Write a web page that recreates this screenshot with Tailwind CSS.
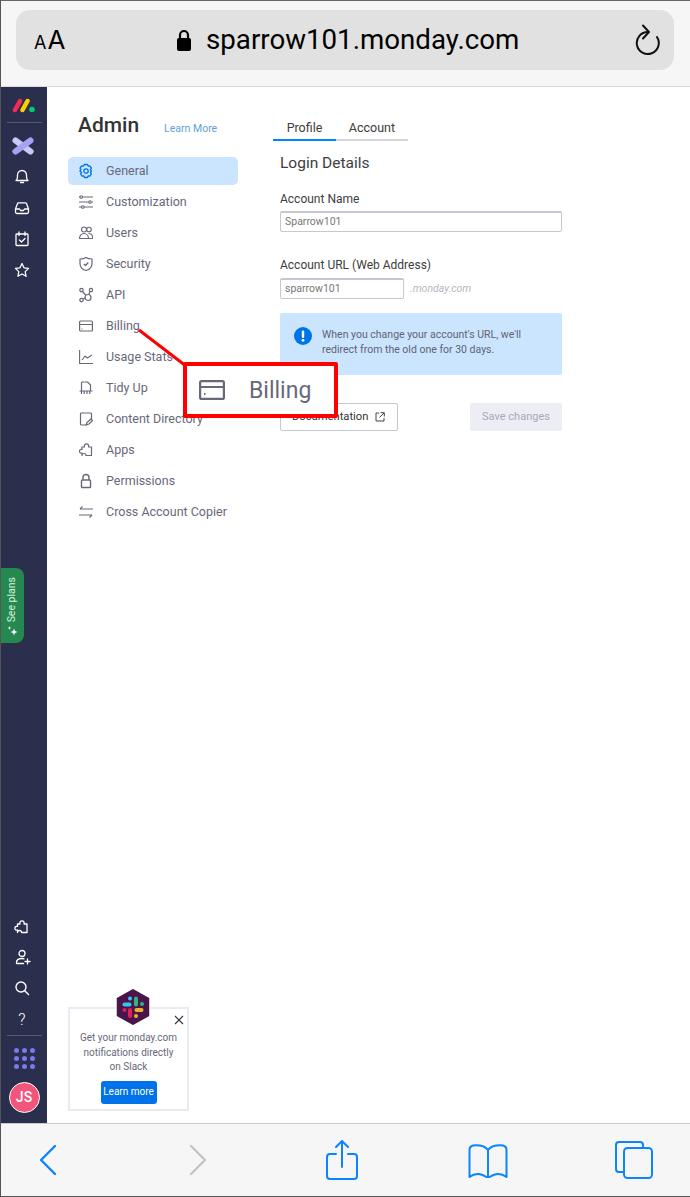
<!DOCTYPE html>
<html><head><meta charset="utf-8"><script src="https://cdn.jsdelivr.net/npm/@tailwindcss/browser@4"></script></head>
<body class="m-0">
<div class="relative w-[690px] h-[1197px] overflow-hidden bg-white font-['Roboto',sans-serif] flex flex-col border-l border-l-[#555] border-t border-t-[#666] border-b border-b-[#555]">
  <!-- top bar -->
  <header class="h-[86px] shrink-0 bg-[#f6f6f6] border-b border-[#dcdcdc] pl-[15px] pr-[16px] pt-[9px]">
    <div class="h-[60px] rounded-[14px] bg-[#e1e1e1] flex items-center pl-[18px] pr-[14px] text-black">
      <div class="font-['Inter',sans-serif] flex items-baseline w-[36px]"><span class="text-[18px] leading-none">A</span><span class="text-[26px] leading-none ml-[1px]">A</span></div>
      <div class="flex items-center gap-[14px] ml-[106px]">
        <svg width="16" height="24" viewBox="0 0 16 24"><path d="M4 11V7a4 4 0 0 1 8 0v4" fill="none" stroke="#000" stroke-width="2.2"/><rect x="1" y="10" width="14" height="13" rx="2" fill="#000"/></svg>
        <span class="text-[27.700px] leading-none">sparrow101.monday.com</span>
      </div>
      <svg class="ml-auto" width="26" height="32" viewBox="0 0 26 32" fill="none" stroke="#111" stroke-width="2" stroke-linecap="round" stroke-linejoin="round"><path d="M14 8A11 11 0 1 0 23 13"/><path d="M9 1.500l6 6.500-6 6.500"/></svg>
    </div>
  </header>

  <!-- main -->
  <div class="flex-1 flex min-h-0">
    <!-- sidebar -->
    <aside class="w-[46px] shrink-0 bg-[#292f4c] flex flex-col items-center pt-[10px] pb-[10px] text-white">
      <svg width="24" height="16" viewBox="0 0 24 16"><path d="M3 13L8 4" stroke="#f62b54" stroke-width="4.500" stroke-linecap="round"/><path d="M10.500 13L15.500 4" stroke="#ffcc00" stroke-width="4.500" stroke-linecap="round"/><circle cx="20" cy="12.500" r="2.800" fill="#00ca72"/></svg>
      <div class="w-[35px] h-px bg-[#565b75] mt-[9px]"></div>
      <svg class="mt-[14px] mr-[3px]" width="22" height="18" viewBox="0 0 22 18" stroke-width="6" stroke-linecap="round"><path d="M3.500 3.500L18.500 14.500" stroke="#cbc8f8"/><path d="M18.500 3.500L3.500 14.500" stroke="#a5a2f3"/></svg>
      <svg class="mt-[13px] mr-[4px]" width="16" height="16" viewBox="0 0 16 16" fill="none" stroke="#fff" stroke-width="1.300" stroke-linejoin="round" stroke-linecap="round"><path d="M2 12.500c1.200-1 1.500-2 1.500-4V7a4.500 4.500 0 0 1 9 0v1.500c0 2 .3 3 1.500 4z"/><path d="M6.500 14.500h3"/></svg>
      <svg class="mt-[16px] mr-[4px]" width="16" height="16" viewBox="0 0 16 16" fill="none" stroke="#fff" stroke-width="1.300" stroke-linejoin="round"><path d="M1.500 9l2-5.500a1 1 0 0 1 1-.7h7a1 1 0 0 1 1 .7l2 5.500v3a1.500 1.500 0 0 1-1.500 1.500h-10A1.500 1.500 0 0 1 1.500 12z"/><path d="M1.500 9h4l1 1.500h3l1-1.500h4"/></svg>
      <svg class="mt-[15px] mr-[4px]" width="16" height="16" viewBox="0 0 16 16" fill="none" stroke="#fff" stroke-width="1.300" stroke-linejoin="round" stroke-linecap="round"><rect x="2" y="3" width="12" height="11.500" rx=".8"/><path d="M5 1v3.500M11 1v3.500M5.500 9l2 2 3.500-3.500"/></svg>
      <svg class="mt-[15px] mr-[4px]" width="16" height="16" viewBox="0 0 16 16" fill="none" stroke="#fff" stroke-width="1.300" stroke-linejoin="round"><path d="M8 1.500l2 4.300 4.600.6-3.400 3.200.9 4.700L8 12l-4.100 2.300.9-4.700-3.400-3.200 4.600-.6z"/></svg>

      <div class="mt-[290px] self-start w-[23px] h-[75px] bg-[#25894f] rounded-r-[8px] flex flex-col items-center justify-center gap-[3px] pt-[3px]">
        <span class="[writing-mode:vertical-rl] rotate-180 text-[10.500px] leading-none text-[#d8f0e0]">See plans</span>
        <svg width="12" height="12" viewBox="0 0 12 12" fill="#fff"><path d="M7 3.500l1 2.500 2.500 1-2.500 1-1 2.500-1-2.500-2.500-1 2.500-1z"/><path d="M2.500 1l.5 1.500 1.500.5-1.500.5-.5 1.500-.5-1.500L.5 3 2 2.500z"/></svg>
      </div>

      <div class="mt-auto flex flex-col items-center">
        <svg class="mr-[4px]" width="16" height="16" viewBox="0 0 16 16" fill="none" stroke="#fff" stroke-width="1.300" stroke-linejoin="round"><path d="M3.500 5h2.500a2.200 2.200 0 1 1 4 0h3v8.500H7.500a2 2 0 0 0-4 0v-2.500a1.900 1.900 0 1 1 0-3.500z"/></svg>
        <svg class="mt-[14px] mr-[3px]" width="16" height="16" viewBox="0 0 16 16" fill="none" stroke="#fff" stroke-width="1.300" stroke-linecap="round"><circle cx="7" cy="4.500" r="3"/><path d="M1.500 14.500v-1c0-2.500 2-4 5.500-4 .8 0 1.500 .1 2 .3M1.500 14.500h7M12.500 10v5M10 12.500h5"/></svg>
        <svg class="mt-[15px] mr-[4px]" width="16" height="16" viewBox="0 0 16 16" fill="none" stroke="#fff" stroke-width="1.400" stroke-linecap="round"><circle cx="7" cy="7" r="5"/><path d="M11 11l3.500 3.500"/></svg>
        <span class="mt-[15px] mr-[4px] text-[16px] font-light leading-[18px] h-[18px]">?</span>
        <div class="w-[35px] h-px bg-[#565b75] mt-[6px]"></div>
        <div class="mt-[12px] grid grid-cols-3 gap-x-[3px] gap-y-[3px]">
          <i class="block w-[5px] h-[5px] rounded-full bg-[#7b78ee]"></i><i class="block w-[5px] h-[5px] rounded-full bg-[#7b78ee]"></i><i class="block w-[5px] h-[5px] rounded-full bg-[#7b78ee]"></i>
          <i class="block w-[5px] h-[5px] rounded-full bg-[#7b78ee]"></i><i class="block w-[5px] h-[5px] rounded-full bg-[#7b78ee]"></i><i class="block w-[5px] h-[5px] rounded-full bg-[#7b78ee]"></i>
          <i class="block w-[5px] h-[5px] rounded-full bg-[#7b78ee]"></i><i class="block w-[5px] h-[5px] rounded-full bg-[#7b78ee]"></i><i class="block w-[5px] h-[5px] rounded-full bg-[#7b78ee]"></i>
        </div>
        <div class="mt-[13px] w-[31px] h-[31px] rounded-full bg-[#f2557a] border border-white flex items-center justify-center text-[14px] font-medium text-white">JS</div>
      </div>
    </aside>

    <!-- nav column -->
    <section class="w-[205px] shrink-0 pl-[21px] flex flex-col">
      <div class="flex items-baseline pl-[10px] pt-[24px] h-[70px]">
        <span class="text-[21px] font-medium leading-[28px] text-[#333]">Admin</span>
        <span class="ml-[25px] text-[10.500px] text-[#5f9fdc]">Learn More</span>
      </div>
      <nav class="w-[170px] flex flex-col gap-[3px] text-[12.500px] text-[#676879]">
        <a class="h-[28px] rounded-[5px] bg-[#cce5ff] flex items-center">
          <svg class="ml-[11px] mr-[13px]" width="14" height="16" viewBox="0 0 14 16" fill="none" stroke="#0073ea" stroke-width="1.300" stroke-linejoin="round"><path d="M5.500 1.500h3l.6 1.600 1.700-.3 1.600 2.400-1 1.400 1.100 1.400-1.100 1.400 1 1.400-1.600 2.400-1.700-.3-.6 1.600h-3l-.6-1.600-1.700.3-1.600-2.400 1-1.400L.9 8l1.100-1.400-1-1.400 1.600-2.400 1.700.3z"/><circle cx="7" cy="8" r="2.200"/></svg>General</a>
        <a class="h-[28px] flex items-center">
          <svg class="ml-[11px] mr-[13px]" width="14" height="16" viewBox="0 0 14 16" fill="none" stroke="#676879" stroke-width="1.100"><path d="M3.500 3H14M0 3h1M0 8h9.500M12.500 8H14M5 13h9M0 13h2.500"/><circle cx="2.200" cy="3" r="1.300"/><circle cx="11" cy="8" r="1.300"/><circle cx="3.800" cy="13" r="1.300"/></svg>Customization</a>
        <a class="h-[28px] flex items-center">
          <svg class="ml-[11px] mr-[13px]" width="14" height="16" viewBox="0 0 14 16" fill="none" stroke="#676879" stroke-width="1.100"><circle cx="5" cy="4.500" r="2.500"/><circle cx="10" cy="4.500" r="2.300"/><path d="M.5 13.500c0-3 2-5 4.500-5s4.500 2 4.500 5zM9.500 8.500c2.500 0 4.200 2 4.200 5h-4"/></svg>Users</a>
        <a class="h-[28px] flex items-center">
          <svg class="ml-[11px] mr-[13px]" width="14" height="16" viewBox="0 0 14 16" fill="none" stroke="#676879" stroke-width="1.200" stroke-linejoin="round"><path d="M7 1.500c1.500 1 3.500 1.500 6 1.500v4.500c0 3.500-2.500 6-6 7-3.500-1-6-3.500-6-7V3c2.500 0 4.500-.5 6-1.500z"/><path d="M4.800 8l1.700 1.500L9.300 6.500"/></svg>Security</a>
        <a class="h-[28px] flex items-center">
          <svg class="ml-[11px] mr-[13px]" width="14" height="16" viewBox="0 0 14 16" fill="none" stroke="#676879" stroke-width="1.200"><circle cx="2.500" cy="3" r="1.700"/><circle cx="12" cy="3" r="1.700"/><circle cx="2.500" cy="13" r="1.700"/><circle cx="9" cy="10.500" r="3"/><path d="M3.500 4.500l3.500 4M11 4.500l-1.200 3M4 12l2.200-.7"/></svg>API</a>
        <a class="h-[28px] flex items-center">
          <svg class="ml-[11px] mr-[13px]" width="14" height="16" viewBox="0 0 14 16" fill="none" stroke="#676879" stroke-width="1.200"><rect x=".6" y="3" width="12.800" height="10" rx="1"/><path d="M.6 6.500h12.800M2.500 11h1"/></svg>Billing</a>
        <a class="h-[28px] flex items-center">
          <svg class="ml-[11px] mr-[13px]" width="14" height="16" viewBox="0 0 14 16" fill="none" stroke="#676879" stroke-width="1.100" stroke-linejoin="round"><path d="M.6 1v13.500H14M3 11l3-4 2.500 2L13 6"/></svg>Usage Stats</a>
        <a class="h-[28px] flex items-center">
          <svg class="ml-[11px] mr-[13px]" width="14" height="16" viewBox="0 0 14 16" fill="none" stroke="#676879" stroke-width="1.200" stroke-linejoin="round"><path d="M2.500 11V3a1 1 0 0 1 1-1h5l3 3v6M.5 11h13M2.500 11v3M5.200 11v3M8 11v3M10.800 11v3"/></svg>Tidy Up</a>
        <a class="h-[28px] flex items-center">
          <svg class="ml-[11px] mr-[13px]" width="14" height="16" viewBox="0 0 14 16" fill="none" stroke="#676879" stroke-width="1.200" stroke-linejoin="round"><path d="M12.500 8V3a1 1 0 0 0-1-1h-9a1 1 0 0 0-1 1v10a1 1 0 0 0 1 1h5"/><path d="M7 14l1-2.500L12 8l1.500 1.500-3.500 3.500z"/></svg>Content Directory</a>
        <a class="h-[28px] flex items-center">
          <svg class="ml-[11px] mr-[13px]" width="14" height="16" viewBox="0 0 14 16" fill="none" stroke="#676879" stroke-width="1.200" stroke-linejoin="round"><path d="M3 5h2.500a2.200 2.200 0 1 1 4 0h3v8.500H7a2 2 0 0 0-4 0v-2.500a1.900 1.900 0 1 1 0-3.500z"/></svg>Apps</a>
        <a class="h-[28px] flex items-center">
          <svg class="ml-[11px] mr-[13px]" width="14" height="16" viewBox="0 0 14 16" fill="none" stroke="#676879" stroke-width="1.400"><path d="M4 7V4.500a3 3 0 0 1 6 0V7"/><rect x="2.500" y="7" width="9" height="7.500" rx=".8"/></svg>Permissions</a>
        <a class="h-[28px] flex items-center">
          <svg class="ml-[11px] mr-[13px]" width="14" height="16" viewBox="0 0 14 16" fill="none" stroke="#676879" stroke-width="1.200" stroke-linejoin="round"><path d="M14 5H1M3.500 2.500L1 5M0 11h13M10.500 13.500L13 11"/></svg>Cross Account Copier</a>
      </nav>
      <!-- slack card -->
      <div class="mt-auto mb-[12px] w-[121px] h-[104px] border-2 border-[#e9ebf3] flex flex-col items-center text-[10px] leading-[14.500px] text-[#676879] relative">
        <svg class="absolute left-[104px] top-[6px]" width="10" height="10" viewBox="0 0 10 10" stroke="#333" stroke-width="1.100"><path d="M1 1l8 8M9 1l-8 8"/></svg>
        <p class="mt-[22px] text-center w-[100px]">Get your monday.com notifications directly on Slack</p>
        <div class="mt-[6px] w-[56px] h-[23px] rounded-[3px] bg-[#0073ea] text-white flex items-center justify-center">Learn more</div>
      </div>
    </section>

    <!-- content -->
    <section class="w-[300px] shrink-0 pl-[21px] pt-[19px] text-[#3d3d3d]">
      <div class="flex w-[135px] h-[35px] border-b-2 border-[#d5d8df] text-[12.500px] leading-[43px]">
        <div class="w-[63px] h-[35px] text-center border-b-2 border-[#0085ff] box-border">Profile</div>
        <div class="w-[72px] text-center">Account</div>
      </div>
      <div class="pl-[7px]">
        <h2 class="mt-[12px] text-[15.500px] leading-[20px]">Login Details</h2>
        <div class="mt-[19px] text-[12px] leading-[14px]">Account Name</div>
        <div class="mt-[5px] w-[282px] h-[21px] rounded-[2px] border border-[#c5c7d4] border-t-2 flex items-center pl-[4px] text-[10.500px] text-[#777]">Sparrow101</div>
        <div class="mt-[26px] text-[12px] leading-[14px]">Account URL (Web Address)</div>
        <div class="mt-[6px] flex items-center">
          <div class="w-[124px] h-[21px] rounded-[2px] border border-[#c5c7d4] border-t-2 flex items-center pl-[4px] text-[10.500px] text-[#777]">sparrow101</div>
          <span class="ml-[6px] text-[10.500px] italic text-[#b5b7c2]">.monday.com</span>
        </div>
        <div class="mt-[14px] w-[282px] h-[62px] rounded-[2px] bg-[#cce5ff] flex items-start pl-[14px] pt-[14px]">
          <svg class="shrink-0" width="18" height="18" viewBox="0 0 18 18"><circle cx="9" cy="9" r="9" fill="#0073ea"/><rect x="7.800" y="3.500" width="2.400" height="7.500" rx="1.200" fill="#fff"/><circle cx="9" cy="13.300" r="1.400" fill="#fff"/></svg>
          <p class="ml-[10px] text-[10.500px] leading-[15px] text-[#606272] w-[225px]">When you change your account's URL, we'll redirect from the old one for 30 days.</p>
        </div>
        <div class="mt-[28px] w-[282px] flex justify-between">
          <div class="w-[118px] h-[28px] rounded-[2px] border border-[#c5c7d4] flex items-center pl-[11px] text-[11.200px] text-[#333] gap-[6px]">Documentation
            <svg class="ml-[1px]" width="10" height="10" viewBox="0 0 10 10" fill="none" stroke="#444" stroke-width="1"><path d="M4 1H1v8h8V6M5.500 .7h3.800v3.800M9 1L4.500 5.500"/></svg>
          </div>
          <div class="w-[92px] h-[28px] rounded-[2px] bg-[#ecedf5] flex items-center justify-center text-[11px] text-[#a8aab8]">Save changes</div>
        </div>
      </div>
    </section>
  </div>

  <!-- bottom bar -->
  <footer class="h-[73px] shrink-0 bg-[#f6f6f6] border-t border-[#c9c9c9] relative flex items-center pl-[38px]">
    <svg width="18" height="32" viewBox="0 0 18 32" fill="none" stroke="#0a84ff" stroke-width="2.400" stroke-linecap="round" stroke-linejoin="round"><path d="M16 2L2 16l14 14"/></svg>
    <svg class="ml-[132px]" width="18" height="32" viewBox="0 0 18 32" fill="none" stroke="#c4c4c4" stroke-width="2.400" stroke-linecap="round" stroke-linejoin="round"><path d="M2 2l14 14L2 30"/></svg>
    <svg class="ml-[119px]" width="32" height="40" viewBox="0 0 32 40" fill="none" stroke="#0a84ff" stroke-width="2" stroke-linecap="round" stroke-linejoin="round"><path d="M16 27V2M10 7l6-6 6 6M10 14H4a3 3 0 0 0-3 3v19a3 3 0 0 0 3 3h24a3 3 0 0 0 3-3V17a3 3 0 0 0-3-3h-6"/></svg>
    <svg class="ml-[110px] mt-[2px]" width="40" height="34" viewBox="0 0 40 34" fill="none" stroke="#0a84ff" stroke-width="2" stroke-linecap="round" stroke-linejoin="round"><path d="M20 6C17 2 11 1 5 1.500 2.500 2 1.500 3.500 1.500 6v27c4-3 8-4 13-2 2 .8 4 2.500 5.500 2.500S23.500 31.800 25.500 31c5-2 9-1 13 2V6c0-2.500-1-4-3.500-4.500C29 1 23 2 20 6zM20 6v27"/></svg>
    <svg class="ml-[107px]" width="38" height="38" viewBox="0 0 38 38" fill="none" stroke="#0a84ff" stroke-width="2" stroke-linejoin="round"><path d="M28 6V4a3 3 0 0 0-3-3H4a3 3 0 0 0-3 3v24a3 3 0 0 0 3 3h5"/><rect x="9" y="7" width="28" height="30" rx="3.500"/></svg>
  </footer>

  <!-- overlays -->
  <svg class="absolute left-[136px] top-[327px]" width="52" height="40" viewBox="0 0 52 40"><path d="M2 2L49 38" stroke="#ff0000" stroke-width="3"/></svg>
  <div class="absolute left-[182px] top-[361px] w-[155px] h-[56px] bg-white border-[4px] border-[#ff0000] rounded-[2px] flex items-center text-[#676879]">
    <svg class="ml-[12px] mr-[24px]" width="26" height="20" viewBox="0 0 26 20" fill="none" stroke="#676879" stroke-width="2.200"><rect x="1.100" y="1.100" width="23.800" height="17.800" rx="1.500"/><path d="M1 7h24M5 14h1.500"/></svg>
    <span class="text-[23px] leading-none">Billing</span>
  </div>
  <svg class="absolute left-[113px] top-[986px]" width="38" height="40" viewBox="0 0 38 40"><path d="M19 1L36 10.500V29.500L19 39 2 29.500V10.500z" fill="#4a154b" stroke="#fff" stroke-width="1.500"/>
    <g stroke-width="4" stroke-linecap="round" fill="none"><path d="M10.500 17.500h5" stroke="#36c5f0"/><path d="M22 11.500v6" stroke="#2eb67d"/><path d="M22.500 23h5" stroke="#ecb22e"/><path d="M16 23v6" stroke="#e01e5a"/></g>
    <circle cx="16" cy="11.500" r="2" fill="#36c5f0"/><circle cx="28" cy="17" r="2" fill="#2eb67d"/><circle cx="22" cy="29" r="2" fill="#ecb22e"/><circle cx="10.500" cy="23" r="2" fill="#e01e5a"/></svg>
</div>
</body></html>
